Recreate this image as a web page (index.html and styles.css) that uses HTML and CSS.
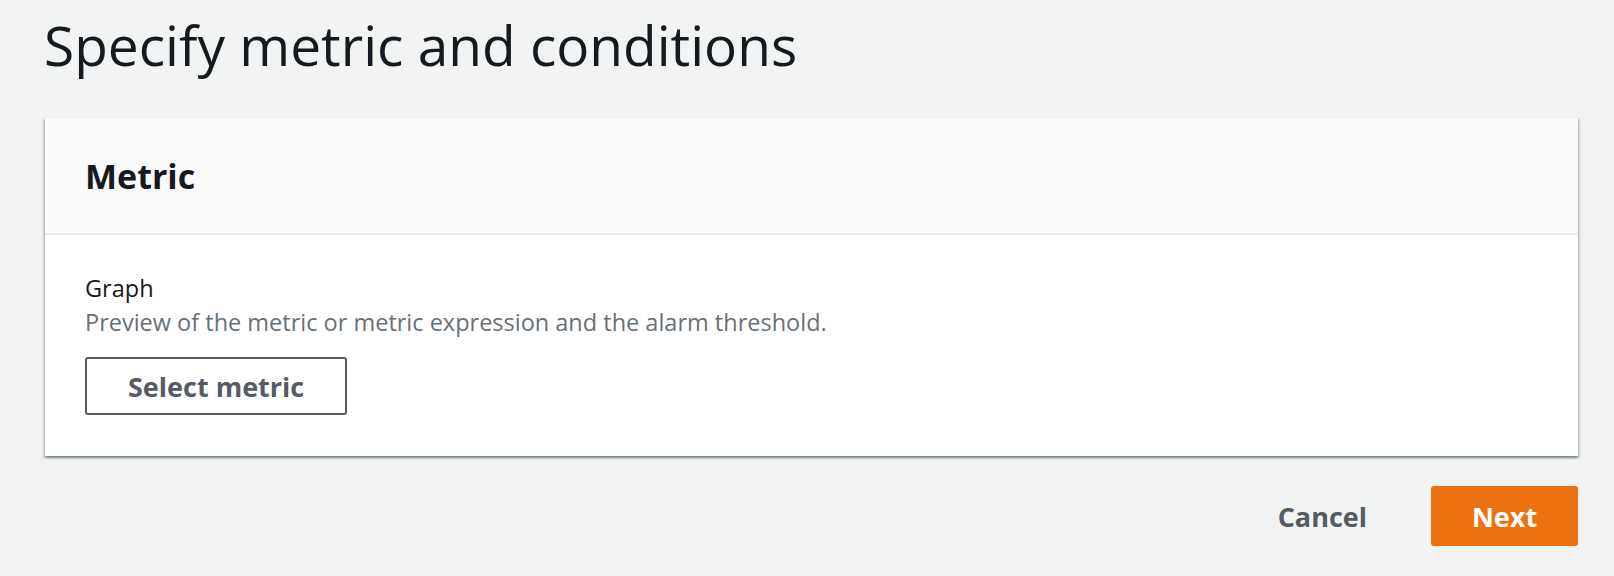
FILE: index.html
```html
<!DOCTYPE html>
<html lang="en">
<head>
<meta charset="utf-8">
<title>Specify metric and conditions</title>
<link rel="stylesheet" href="styles.css">
</head>
<body>
<main class="page">
  <h1 class="page-title">Specify metric and conditions</h1>
  <section class="card">
    <header class="card-header">
      <h2 class="card-title">Metric</h2>
    </header>
    <div class="card-body">
      <div class="field-label">Graph</div>
      <div class="field-desc">Preview of the metric or metric expression and the alarm threshold.</div>
      <button class="btn btn-normal" type="button">Select metric</button>
    </div>
  </section>
  <footer class="actions">
    <button class="btn btn-link" type="button">Cancel</button>
    <button class="btn btn-primary" type="button">Next</button>
  </footer>
</main>
</body>
</html>
```
FILE: styles.css
```css
html, body {
  margin: 0;
  padding: 0;
  background: #f2f3f3;
}
body {
  font-family: "Open Sans", "Noto Sans", sans-serif;
  color: #16191f;
}
.page {
  padding: 7px 36px 0 45px;
}
.page-title {
  margin: 0 0 35px -1px;
  font-size: 55px;
  line-height: 75px;
  font-weight: 400;
  color: #16191f;
}
.card {
  background: #ffffff;
  box-shadow: 0 2px 2px rgba(0, 28, 36, 0.3), 2px 2px 2px rgba(0, 28, 36, 0.15), -2px 2px 2px rgba(0, 28, 36, 0.15);
  border-top: 1px solid #eaeded;
}
.card-header {
  display: flex;
  align-items: center;
  height: 115px;
  padding: 0 40px;
  background: #fafafa;
  border-bottom: 2px solid #eaeded;
}
.card-title {
  margin: 0;
  font-size: 34px;
  line-height: 46px;
  font-weight: 700;
  color: #16191f;
}
.card-body {
  padding: 36px 40px 41px;
  display: flex;
  flex-direction: column;
  align-items: flex-start;
}
.field-label {
  font-size: 23.5px;
  line-height: 34px;
  color: #16191f;
}
.field-desc {
  font-size: 23.5px;
  line-height: 34px;
  color: #687078;
  margin-bottom: 18px;
}
.btn {
  font-family: "Open Sans", "Noto Sans", sans-serif;
  font-weight: 700;
  font-size: 27px;
  box-sizing: border-box;
  display: inline-flex;
  align-items: center;
  justify-content: center;
  cursor: pointer;
  border-radius: 3px;
}
.btn-normal {
  height: 58px;
  padding: 0 41px;
  background: #ffffff;
  border: 2px solid #545b64;
  color: #545b64;
}
.actions {
  display: flex;
  justify-content: flex-end;
  align-items: center;
  gap: 32px;
  margin-top: 30px;
}
.btn-link {
  height: 60px;
  padding: 0 32px;
  background: transparent;
  border: none;
  color: #545b64;
}
.btn-primary {
  height: 60px;
  width: 147px;
  padding: 0;
  background: #ec7211;
  border: none;
  color: #ffffff;
}
```
